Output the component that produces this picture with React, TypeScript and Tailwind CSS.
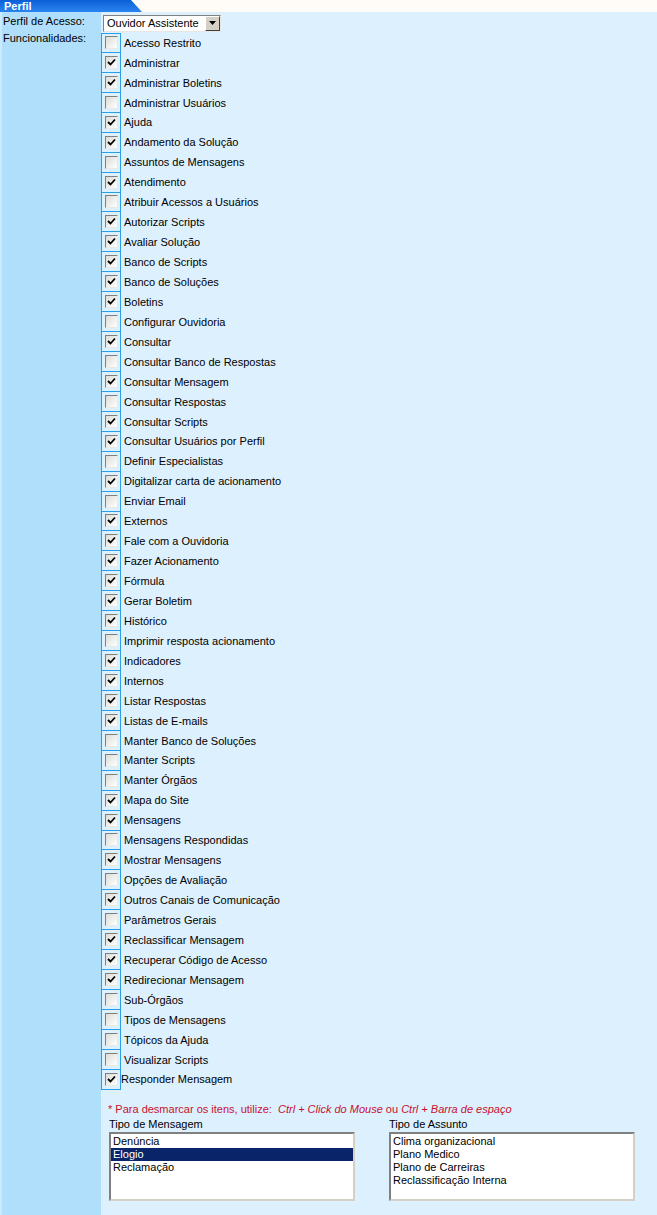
import React from 'react';

type Item = { label: string; checked: boolean };

const items: Item[] = [
  { label: 'Acesso Restrito', checked: false },
  { label: 'Administrar', checked: true },
  { label: 'Administrar Boletins', checked: true },
  { label: 'Administrar Usuários', checked: false },
  { label: 'Ajuda', checked: true },
  { label: 'Andamento da Solução', checked: true },
  { label: 'Assuntos de Mensagens', checked: false },
  { label: 'Atendimento', checked: true },
  { label: 'Atribuir Acessos a Usuários', checked: false },
  { label: 'Autorizar Scripts', checked: true },
  { label: 'Avaliar Solução', checked: true },
  { label: 'Banco de Scripts', checked: true },
  { label: 'Banco de Soluções', checked: true },
  { label: 'Boletins', checked: true },
  { label: 'Configurar Ouvidoria', checked: false },
  { label: 'Consultar', checked: true },
  { label: 'Consultar Banco de Respostas', checked: false },
  { label: 'Consultar Mensagem', checked: true },
  { label: 'Consultar Respostas', checked: false },
  { label: 'Consultar Scripts', checked: true },
  { label: 'Consultar Usuários por Perfil', checked: true },
  { label: 'Definir Especialistas', checked: false },
  { label: 'Digitalizar carta de acionamento', checked: true },
  { label: 'Enviar Email', checked: false },
  { label: 'Externos', checked: true },
  { label: 'Fale com a Ouvidoria', checked: true },
  { label: 'Fazer Acionamento', checked: true },
  { label: 'Fórmula', checked: true },
  { label: 'Gerar Boletim', checked: true },
  { label: 'Histórico', checked: true },
  { label: 'Imprimir resposta acionamento', checked: false },
  { label: 'Indicadores', checked: true },
  { label: 'Internos', checked: true },
  { label: 'Listar Respostas', checked: true },
  { label: 'Listas de E-mails', checked: true },
  { label: 'Manter Banco de Soluções', checked: false },
  { label: 'Manter Scripts', checked: false },
  { label: 'Manter Órgãos', checked: false },
  { label: 'Mapa do Site', checked: true },
  { label: 'Mensagens', checked: true },
  { label: 'Mensagens Respondidas', checked: false },
  { label: 'Mostrar Mensagens', checked: true },
  { label: 'Opções de Avaliação', checked: false },
  { label: 'Outros Canais de Comunicação', checked: true },
  { label: 'Parâmetros Gerais', checked: false },
  { label: 'Reclassificar Mensagem', checked: true },
  { label: 'Recuperar Código de Acesso', checked: true },
  { label: 'Redirecionar Mensagem', checked: true },
  { label: 'Sub-Órgãos', checked: false },
  { label: 'Tipos de Mensagens', checked: false },
  { label: 'Tópicos da Ajuda', checked: false },
  { label: 'Visualizar Scripts', checked: false },
];

const tiposMensagem = ['Denúncia', 'Elogio', 'Reclamação'];
const tiposAssunto = ['Clima organizacional', 'Plano Medico', 'Plano de Carreiras', 'Reclassificação Interna'];

function CheckBox({ checked }: { checked: boolean }) {
  return (
    <div className="w-[13px] h-[13px] border border-t-[#808080] border-l-[#808080] border-b-[#e8e8e8] border-r-[#e8e8e8] bg-gradient-to-br from-[#dcdcd7] to-[#ffffff] flex items-center justify-center">
      {checked && (
        <svg width="9" height="9" viewBox="0 0 9 9">
          <path d="M1 4 L3.5 6.5 L8 1.5" fill="none" stroke="#000" strokeWidth="1.8" />
        </svg>
      )}
    </div>
  );
}

function Row({ item, first, tight }: { item: Item; first?: boolean; tight?: boolean }) {
  return (
    <div className="flex items-center h-[19.94px]">
      <div
        className={`w-[20px] h-full flex items-center justify-center border-x border-b border-[#2c9ee6] ${first ? 'border-t' : ''}`}
      >
        <CheckBox checked={item.checked} />
      </div>
      <span className={tight ? 'pl-0' : 'pl-[3px]'}>{item.label}</span>
    </div>
  );
}

function ListBox({ options, selected }: { options: string[]; selected?: number }) {
  return (
    <div className="w-[246px] h-[69px] bg-white border-2 border-t-[#808080] border-l-[#808080] border-b-[#d4d0c8] border-r-[#d4d0c8] py-[1px]">
      {options.map((o, i) => (
        <div
          key={o}
          className={`h-[13px] leading-[13px] px-[2px] ${i === selected ? 'bg-[#0a246a] text-white' : ''}`}
        >
          {o}
        </div>
      ))}
    </div>
  );
}

export default function App() {
  return (
    <div className="w-[657px] min-h-[1215px] flex flex-col font-['Liberation_Sans',Arial,sans-serif] text-[11px] text-black">
      <div className="h-[12px] flex bg-[#fffbf6]">
        <div className="w-[142px] h-full bg-gradient-to-b from-[#0b5fd6] to-[#2a84ef] [clip-path:polygon(0_0,131px_0,142px_100%,0_100%)] text-white font-bold leading-[12px] pl-[4px]">
          Perfil
        </div>
      </div>
      <div className="flex flex-1">
        <div className="w-[101px] bg-[#b0dffb] border-l-2 border-[#c9eafd] pt-[3px] pl-[1px] flex flex-col">
          <div className="leading-[13px]">Perfil de Acesso:</div>
          <div className="leading-[13px] mt-[4px]">Funcionalidades:</div>
        </div>
        <div className="flex-1 bg-[#ddf0fe] pt-[1px]">
          <div className="pl-[2px] h-[20px] flex items-center">
            <div className="w-[118px] h-[17px] flex items-center bg-white border border-t-[#808080] border-l-[#808080] border-b-[#e6e6e6] border-r-[#e6e6e6]">
              <span className="flex-1 pl-[3px] leading-[15px] whitespace-nowrap overflow-hidden">Ouvidor Assistente</span>
              <div className="w-[15px] h-[15px] bg-[#d4d0c8] border border-t-[#ffffff] border-l-[#ffffff] border-b-[#404040] border-r-[#404040] flex items-center justify-center">
                <svg width="7" height="4" viewBox="0 0 7 4">
                  <path d="M0 0 H7 L3.5 4 Z" fill="#000" />
                </svg>
              </div>
            </div>
          </div>
          <div className="flex flex-col">
            {items.map((it, i) => (
              <Row key={it.label} item={it} first={i === 0} />
            ))}
            <Row item={{ label: 'Responder Mensagem', checked: true }} tight />
          </div>
          <div className="pl-[7px] pt-[13px] text-[#c8102e] leading-[13px]">
            * Para desmarcar os itens, utilize:&nbsp; <i>Ctrl + Click do Mouse</i> ou <i>Ctrl + Barra de espaço</i>
          </div>
          <div className="flex pl-[8px] pt-[2px] gap-[34px]">
            <div className="flex flex-col">
              <div className="leading-[13px] pb-[1px]">Tipo de Mensagem</div>
              <ListBox options={tiposMensagem} selected={1} />
            </div>
            <div className="flex flex-col">
              <div className="leading-[13px] pb-[1px]">Tipo de Assunto</div>
              <ListBox options={tiposAssunto} />
            </div>
          </div>
        </div>
      </div>
    </div>
  );
}
